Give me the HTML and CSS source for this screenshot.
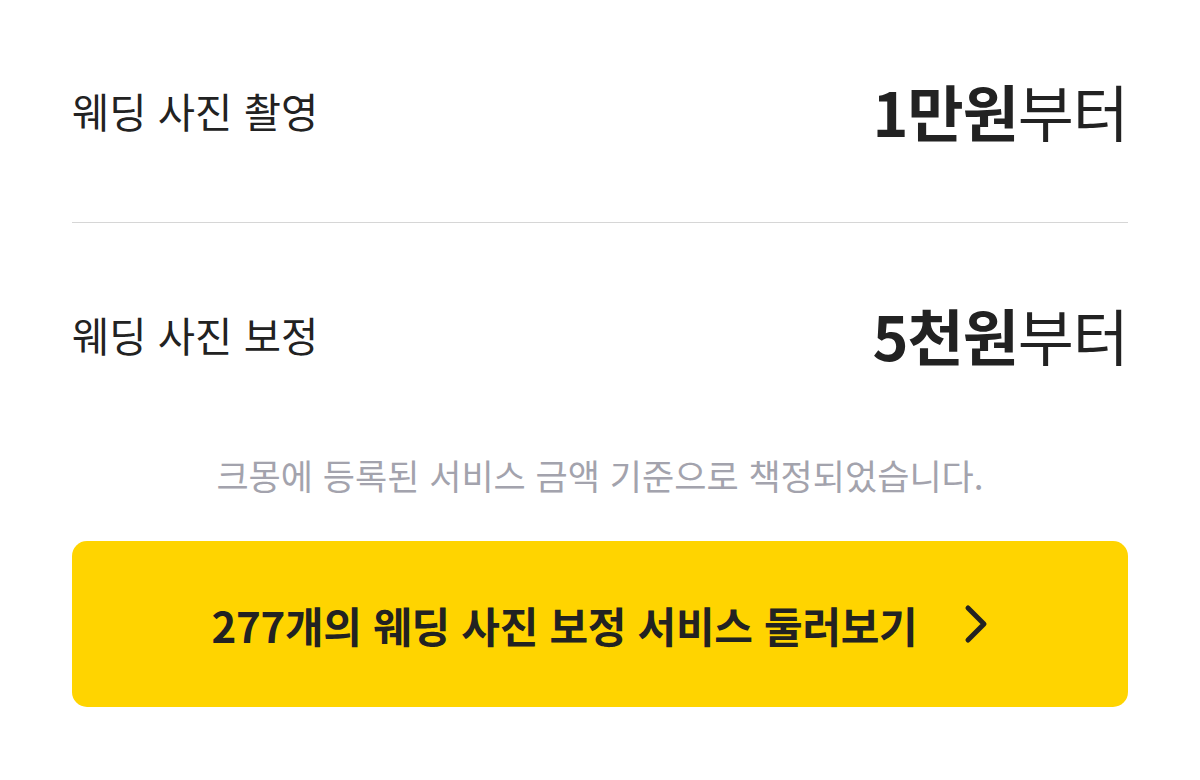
FILE: index.html
```html
<!doctype html>
<html lang="ko">

<head>
    <meta charset="utf-8">
    <title>웨딩 사진 가격</title>
    <link rel="stylesheet" href="styles.css">
</head>

<body>
    <div class="price-box">
        <div class="price-row">
            <span class="price-label">웨딩 사진 촬영</span>
            <span class="price-value"><b>1만원</b>부터</span>
        </div>
        <div class="price-row">
            <span class="price-label">웨딩 사진 보정</span>
            <span class="price-value"><b>5천원</b>부터</span>
        </div>
        <p class="price-note">크몽에 등록된 서비스 금액 기준으로 책정되었습니다.</p>
        <a class="browse-btn" href="#">
            <span>277개의 웨딩 사진 보정 서비스 둘러보기</span>
            <svg class="chevron" width="24" height="40" viewBox="0 0 24 40">
                <path d="M4 4 L20 20 L4 36" fill="none" stroke="#222" stroke-width="5"
                    stroke-linecap="round" stroke-linejoin="round" />
            </svg>
        </a>
    </div>
</body>

</html>
```
FILE: styles.css
```css
body {
    margin: 0;
    background: #fff;
    color: #222;
    font-family: "Noto Sans CJK KR", "Noto Sans", sans-serif;
}

.price-box {
    padding: 0 72px;
}

.price-row {
    display: flex;
    justify-content: space-between;
    align-items: center;
    height: 224px;
}

.price-row:first-child {
    height: 222px;
    border-bottom: 1px solid #d6d6d6;
}

.price-label {
    font-size: 40.5px;
    line-height: 1.3;
}

.price-value {
    font-size: 61px;
    line-height: 1.2;
    letter-spacing: -1px;
}

.price-value b {
    font-weight: 700;
}

.price-note {
    margin: 4px 0 42px;
    text-align: center;
    font-size: 35px;
    line-height: 48px;
    color: #a3a3ad;
}

.browse-btn {
    display: flex;
    align-items: center;
    justify-content: center;
    gap: 47px;
    height: 166px;
    background: #ffd400;
    border-radius: 15px;
    color: #222;
    text-decoration: none;
    font-size: 42px;
    font-weight: 700;
    letter-spacing: -0.3px;
}

.chevron {
    display: block;
}
```
